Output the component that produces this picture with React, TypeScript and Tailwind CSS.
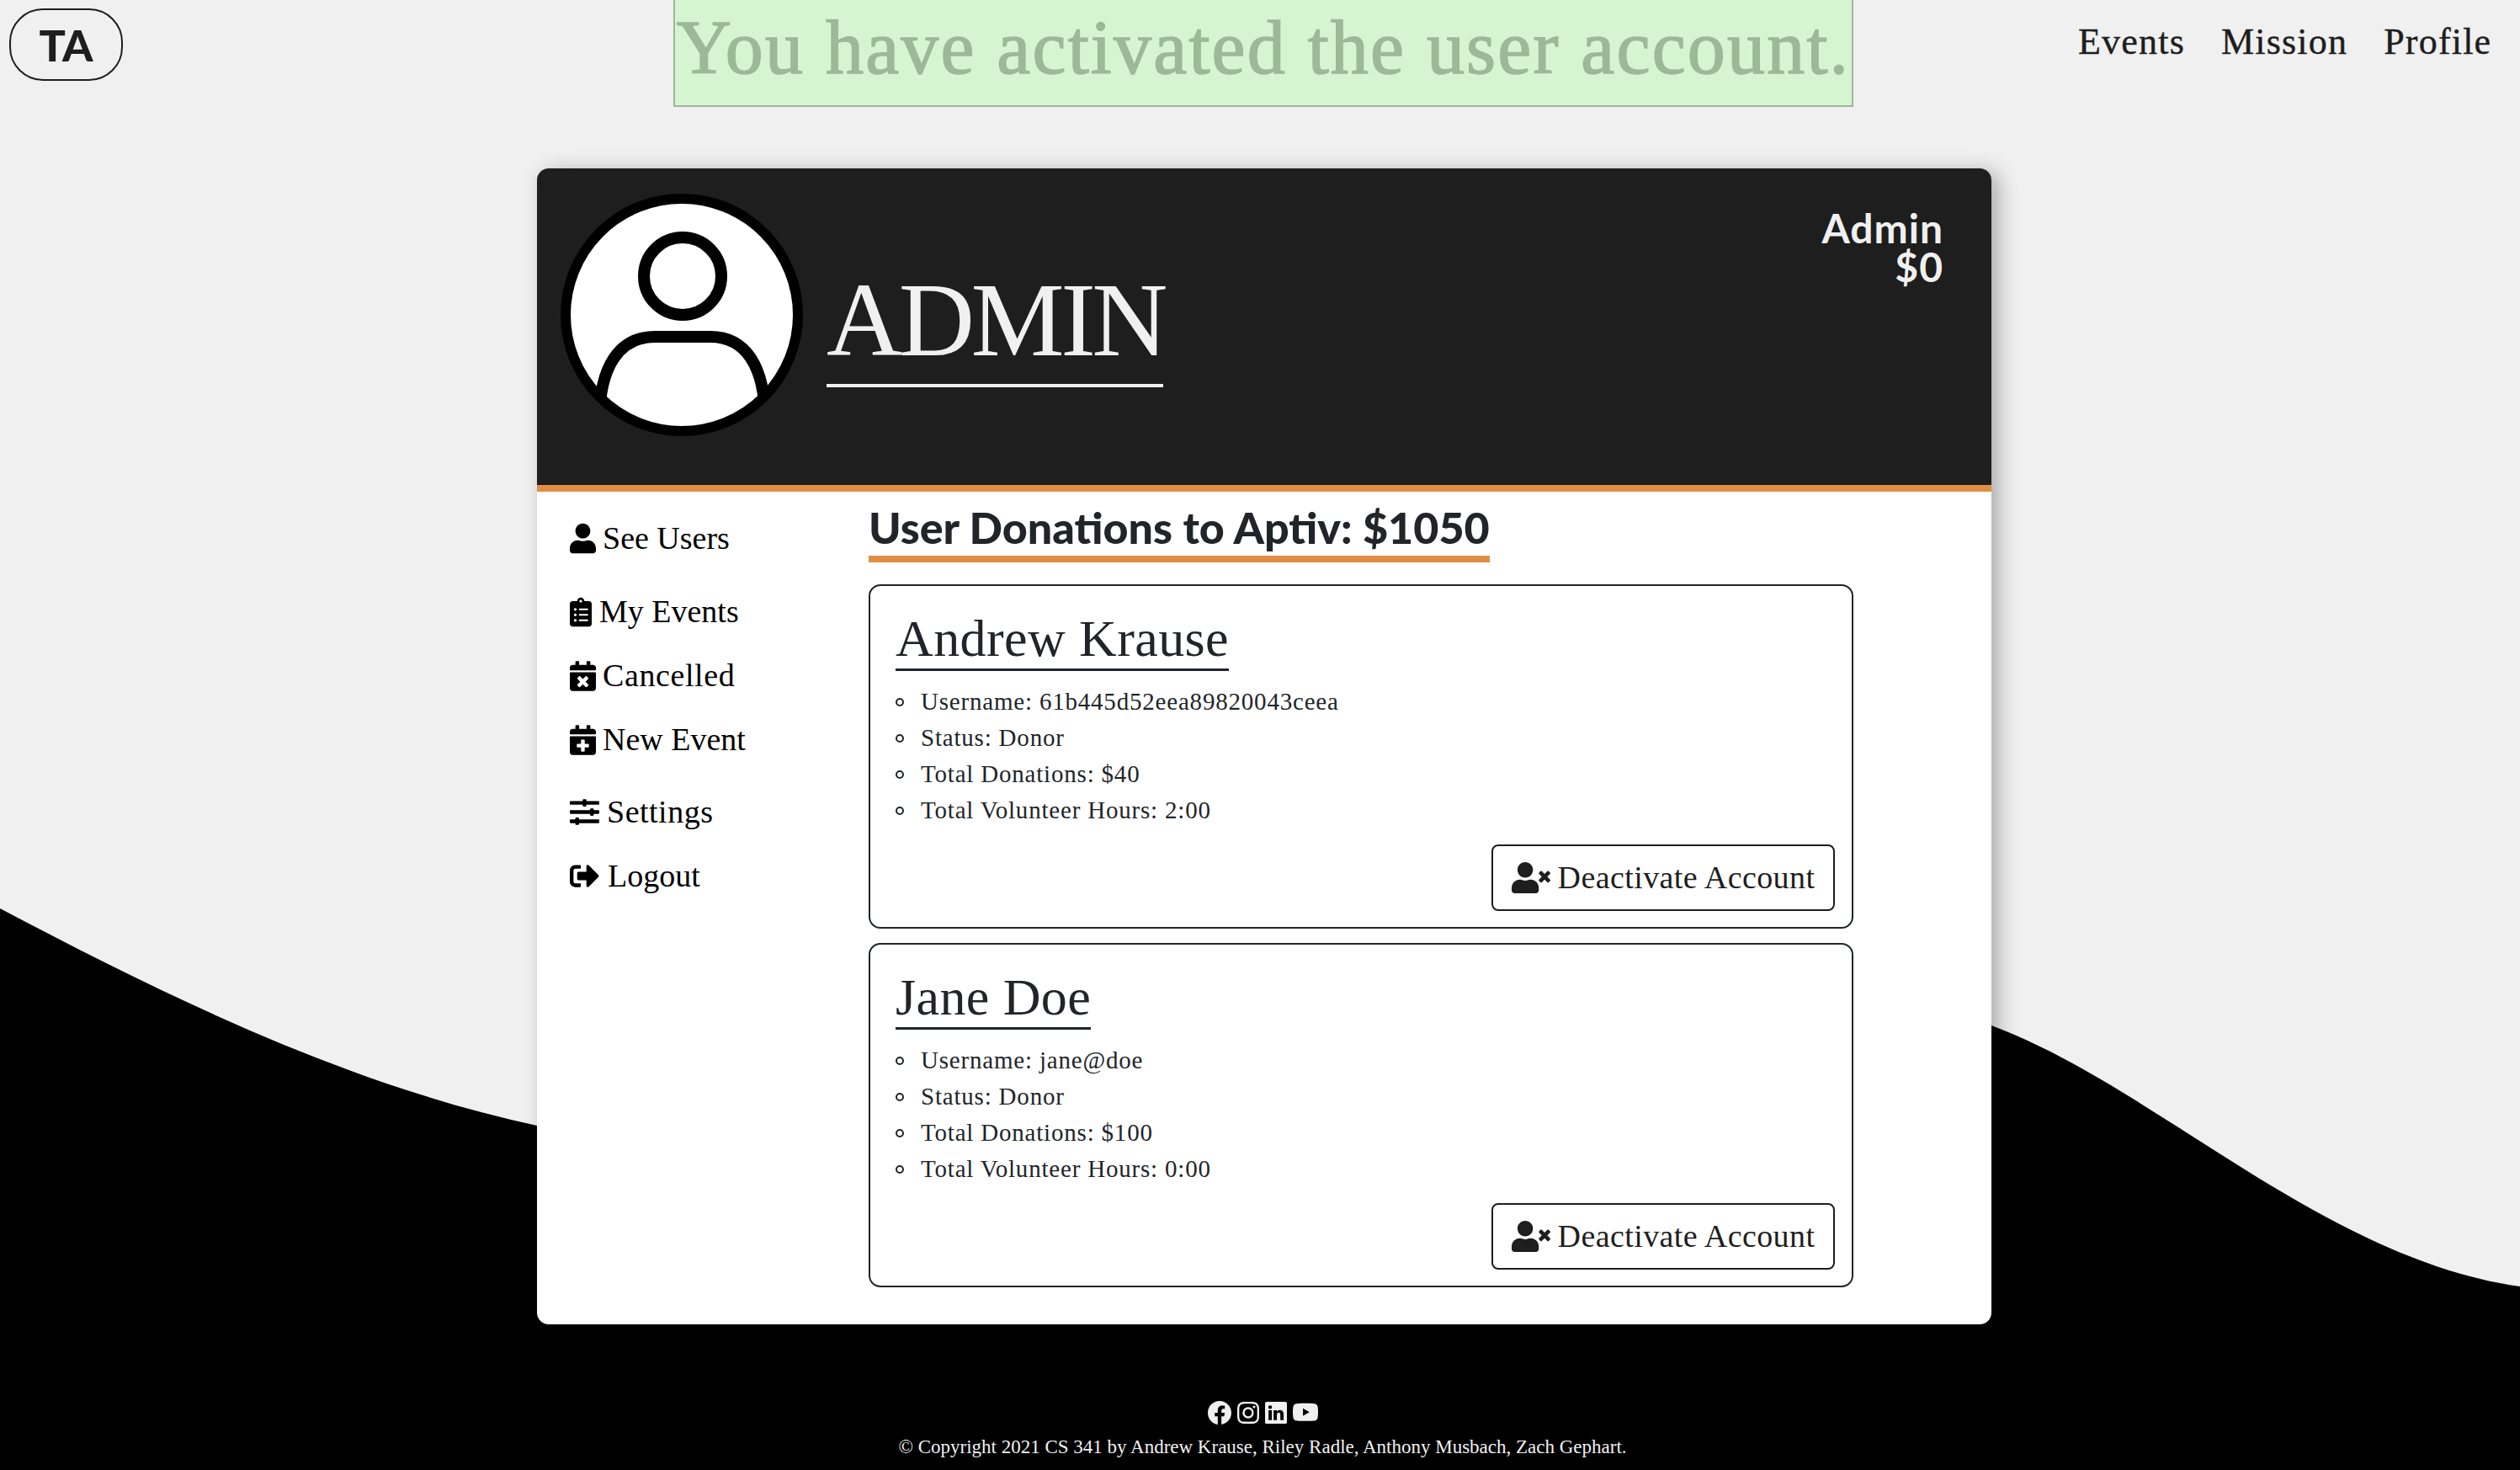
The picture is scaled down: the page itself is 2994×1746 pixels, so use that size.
import {
  FaCalendarPlus,
  FaCalendarTimes,
  FaClipboardList,
  FaSignOutAlt,
  FaSlidersH,
  FaUser,
  FaUserTimes,
} from 'react-icons/fa';
import { BsFacebook, BsInstagram, BsLinkedin, BsYoutube } from 'react-icons/bs';

const serif = '[font-family:"Liberation_Serif",serif]';

const sideLinks = [
  { label: 'See Users', Icon: FaUser, cls: 'h-[37px] mb-[50px] gap-[8px]', icon: 'w-[31px] h-[37px]' },
  { label: 'My Events', Icon: FaClipboardList, cls: 'h-[37px] mb-[39px] gap-[9px]', icon: 'w-[26px] h-[36px]' },
  { label: 'Cancelled', Icon: FaCalendarTimes, cls: 'h-[37px] mb-[39px] gap-[8px] tracking-[0.6px]', icon: 'w-[31px] h-[36px]' },
  { label: 'New Event', Icon: FaCalendarPlus, cls: 'h-[37px] mb-[49px] gap-[8px]', icon: 'w-[31px] h-[36px]' },
  { label: 'Settings', Icon: FaSlidersH, cls: 'h-[37px] mb-[39px] gap-[9px] tracking-[0.5px]', icon: 'w-[35px] h-[35px]' },
  { label: 'Logout', Icon: FaSignOutAlt, cls: 'h-[37px] gap-[10px]', icon: 'w-[35px] h-[35px]' },
];

const users = [
  { name: 'Andrew Krause', username: '61b445d52eea89820043ceea', donations: '$40', hours: '2:00' },
  { name: 'Jane Doe', username: 'jane@doe', donations: '$100', hours: '0:00' },
];

function Detail({ children }: { children: React.ReactNode }) {
  return (
    <li className="flex items-center">
      <span className="w-[10px] h-[10px] mr-[20px] rounded-full border-2 border-[#212529]" />
      {children}
    </li>
  );
}

function UserCard({ name, username, donations, hours }: (typeof users)[number]) {
  return (
    <div className="h-[409px] border-2 border-[#212529] rounded-[14px] pl-[30px] pr-[20px] pt-[30px] text-[#212529] bg-white">
      <h3 className="inline-block text-[62px] leading-[64px] h-[71px] border-b-[3px] border-[#212529] tracking-[0.4px] whitespace-nowrap">
        {name}
      </h3>
      <ul className="mt-[15px] text-[29px] leading-[43px] tracking-[0.8px]">
        <Detail>Username: {username}</Detail>
        <Detail>Status: Donor</Detail>
        <Detail>Total Donations: {donations}</Detail>
        <Detail>Total Volunteer Hours: {hours}</Detail>
      </ul>
      <div className="flex justify-end mt-[19px]">
        <button className="w-[408px] h-[79px] border-2 border-[#1e1e1e] rounded-[8px] flex items-center justify-center gap-[9px] text-[38px] text-[#1e1e1e]">
          <FaUserTimes className="w-[46px] h-[37px]" />
          <span className="tracking-[0.4px]">Deactivate Account</span>
        </button>
      </div>
    </div>
  );
}

export default function App() {
  return (
    <div className={`relative w-full h-[1746px] overflow-hidden bg-[#f0f0f0] ${serif}`}>
      {/* background wave */}
      <svg className="absolute inset-0" width="2994" height="1746" viewBox="0 0 2994 1746">
        <path
          d="M0 1079 C 210 1190, 420 1290, 638 1337 C 1100 1440, 1900 1000, 2366 1218 C 2560 1290, 2760 1495, 2994 1528 L 2994 1746 L 0 1746 Z"
          fill="#000"
        />
      </svg>

      <div className="relative">
        {/* top bar */}
        <nav className="flex items-start h-[127px]">
          <div className="ml-[11px] mt-[10px] w-[135px] h-[86px] border-2 border-[#1e1e1e] rounded-[40px] flex items-center justify-center text-[52px] font-black text-[#1e1e1e] [font-family:Lato,sans-serif]">
            TA
          </div>
          <div className="ml-[654px] w-[1402px] h-[127px] bg-[#d5f5d0] border-2 border-t-0 border-[#9bb996] text-[#9bb996] text-[90px] leading-[113px] tracking-[2.2px] text-center whitespace-nowrap [-webkit-text-stroke:1.5px_#9bb996]">
            You have activated the user account.
          </div>
          <div className="ml-[267px] flex gap-[43px] text-[44px] leading-[100px] tracking-[1.2px] text-[#1e1e1e] [-webkit-text-stroke:0.4px_#1e1e1e]">
            <a href="#events">Events</a>
            <a href="#mission">Mission</a>
            <a href="#profile">Profile</a>
          </div>
        </nav>

        {/* main panel */}
        <main className="ml-[638px] mt-[73px] w-[1728px] h-[1373px] bg-white rounded-[14px] shadow-[8px_4px_24px_rgba(0,0,0,0.3)] overflow-hidden">
          <header className="flex h-[384px] bg-[#1e1e1e] border-b-[8px] border-[#e08e45] pl-[28px] pt-[30px] text-[#f0f0f0]">
            <svg className="w-[288px] h-[288px] shrink-0" viewBox="0 0 288 288">
              <defs>
                <clipPath id="avatar-clip">
                  <circle cx="144" cy="144" r="138" />
                </clipPath>
              </defs>
              <circle cx="144" cy="144" r="138" fill="#fff" />
              <circle cx="145" cy="98" r="46" fill="none" stroke="#000" strokeWidth="14" />
              <path
                d="M46 270 C 46 205, 70 170, 112 170 L 178 170 C 220 170, 243 205, 243 270"
                fill="none"
                stroke="#000"
                strokeWidth="14"
                clipPath="url(#avatar-clip)"
              />
              <circle cx="144" cy="144" r="138" fill="none" stroke="#000" strokeWidth="12" />
            </svg>
            <div className="ml-[28px] mt-[75px] w-[400px] h-[155px] border-b-[4px] border-[#f0f0f0] text-[125px] leading-[150px] tracking-[-4.5px] whitespace-nowrap">
              ADMIN
            </div>
            <div className="ml-auto mr-[57px] mt-[18px] text-right text-[48px] leading-[46px] tracking-[1px] font-bold [font-family:Lato,sans-serif]">
              <div>Admin</div>
              <div>$0</div>
            </div>
          </header>

          <div className="flex">
            <aside className="w-[394px] pl-[39px] pt-[37px] text-[38px] text-black">
              {sideLinks.map(({ label, Icon, cls, icon }) => (
                <a key={label} href="#" className={`flex items-center ${cls}`}>
                  <Icon className={icon} />
                  <span>{label}</span>
                </a>
              ))}
            </aside>
            <section className="w-[1170px] pt-[12px]">
              <h2 className="inline-block h-[72px] border-b-[8px] border-[#e08e45] text-[52px] leading-[60px] font-black text-[#212529] whitespace-nowrap [font-family:Lato,sans-serif]">
                User Donations to Aptiv: $1050
              </h2>
              <div className="mt-[26px] flex flex-col gap-[17px]">
                {users.map(u => (
                  <UserCard key={u.name} {...u} />
                ))}
              </div>
            </section>
          </div>
        </main>

        {/* footer */}
        <footer className="ml-[6px] mt-[90px] text-center text-[#f0f0f0]">
          <div className="flex justify-center items-center gap-[7px]">
            <BsFacebook className="w-[28px] h-[28px]" />
            <BsInstagram className="w-[26px] h-[26px]" />
            <BsLinkedin className="w-[26px] h-[26px]" />
            <BsYoutube className="w-[30px] h-[30px]" />
          </div>
          <p className="mt-[11px] text-[23px] leading-[30px]">
            © Copyright 2021 CS 341 by Andrew Krause, Riley Radle, Anthony Musbach, Zach Gephart.
          </p>
        </footer>
      </div>
    </div>
  );
}
